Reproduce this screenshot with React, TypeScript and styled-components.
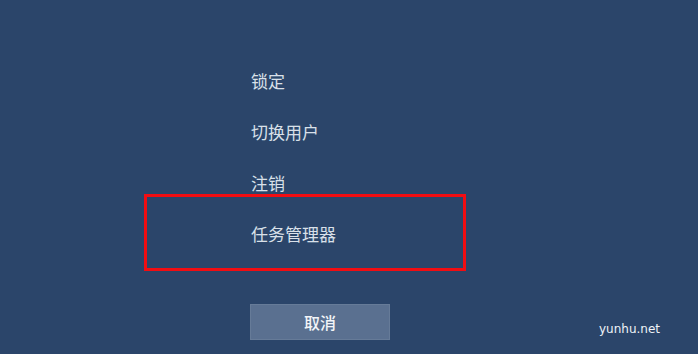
import React from 'react';
import styled, { createGlobalStyle } from 'styled-components';

const GlobalStyle = createGlobalStyle`
  html, body {
    margin: 0;
    padding: 0;
    background: #2b456a;
  }
  body {
    font-family: "Noto Sans CJK SC", "Noto Sans", sans-serif;
  }
`;

const Screen = styled.div`
  position: relative;
  width: 698px;
  height: 354px;
  background: #2b456a;
  overflow: hidden;
`;

const Menu = styled.ul`
  list-style: none;
  margin: 0;
  padding: 55px 0 0 251px;
  display: flex;
  flex-direction: column;
`;

const MenuItem = styled.li<{ $highlight?: boolean }>`
  position: relative;
  height: 51px;
  line-height: 51px;
  font-size: 17px;
  color: #d9e0e9;
  ${(p) =>
    p.$highlight &&
    `
    &::after {
      content: '';
      position: absolute;
      left: -107px;
      top: -14px;
      width: 322px;
      height: 77px;
      box-sizing: border-box;
      border: 3.5px solid #f20d12;
    }
  `}
`;

const CancelButton = styled.button`
  margin: 45px 0 0 250px;
  width: 140px;
  height: 36px;
  border: 1px solid #667b98;
  background: #5a7090;
  color: #f2f5f8;
  font-family: "Noto Sans CJK SC", sans-serif;
  font-size: 16px;
  font-weight: 500;
  padding: 0;
  display: block;
`;

const Watermark = styled.span`
  position: absolute;
  left: 599px;
  top: 322px;
  font-family: "DejaVu Sans", sans-serif;
  font-size: 12px;
  color: #eef2f7;
`;

const items = ['锁定', '切换用户', '注销', '任务管理器'];

export default function App() {
  return (
    <Screen>
      <GlobalStyle />
      <Menu>
        {items.map((label, i) => (
          <MenuItem key={label} $highlight={i === items.length - 1}>
            {label}
          </MenuItem>
        ))}
      </Menu>
      <CancelButton>取消</CancelButton>
      <Watermark>yunhu.net</Watermark>
    </Screen>
  );
}
